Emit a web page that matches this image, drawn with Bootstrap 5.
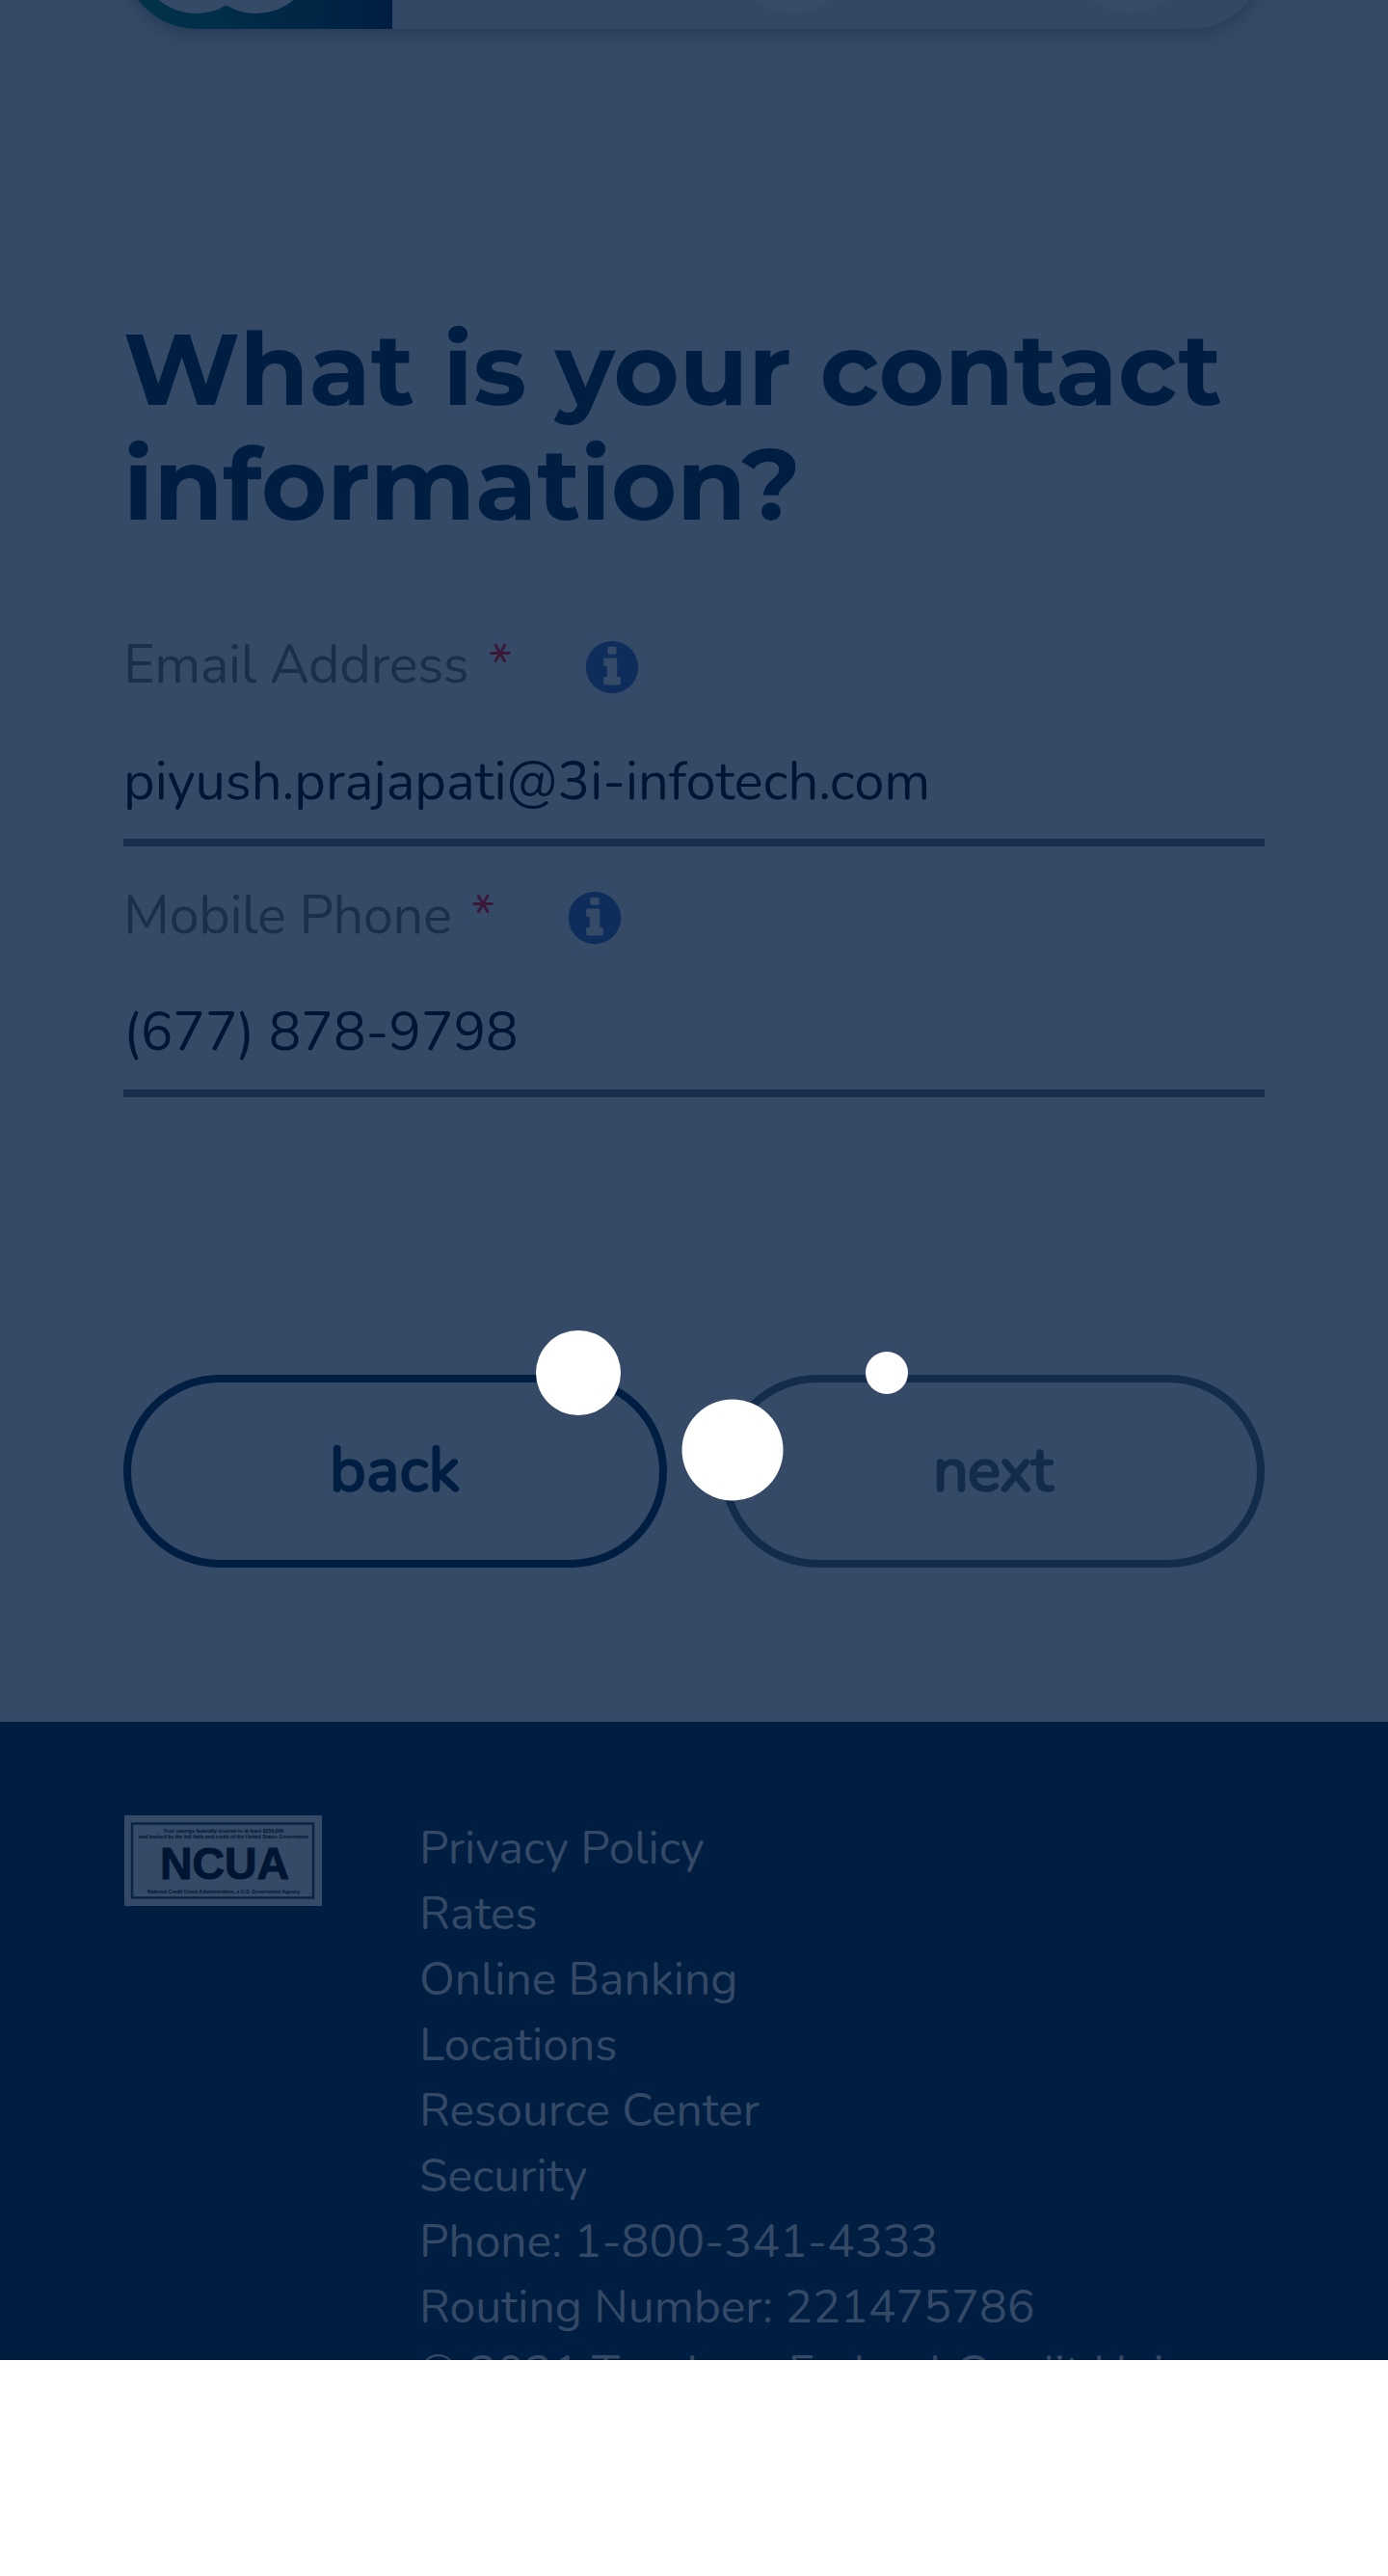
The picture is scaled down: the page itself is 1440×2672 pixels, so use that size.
<!DOCTYPE html>
<html lang="en">
<head>
<meta charset="utf-8">
<meta name="viewport" content="width=device-width, initial-scale=1">
<title>Contact information</title>
<link rel="stylesheet" href="https://cdn.jsdelivr.net/npm/bootstrap@5.3.0/dist/css/bootstrap.min.css">
<style>
  body { font-family: Nunito, Lato, "Open Sans", sans-serif; font-size: 56px; line-height: 84px; color: #001433; background: #fff; }
  .screen { height: 2448px; background: #354a66; }
  .gutter { padding-left: 128px; padding-right: 128px; }

  /* step tracker, scrolled mostly out of view */
  .tracker-clip { height: 70px; }
  .tracker { height: 152px; margin-top: -122px; border-radius: 76px; background: #324864; box-shadow: 0 6px 18px 0 #273c58; }
  .tracker-done { width: 279px; border-radius: 76px 0 0 76px; background: linear-gradient(90deg, #00344a 0, #002e49 35%, #001e42 100%); }
  .tracker svg { display: block; }

  .page-title { margin: 253px 0 0; font: 700 104px/119px Montserrat, Inter, sans-serif; letter-spacing: .1px; color: #001e42; white-space: nowrap; }
  .fields { margin-top: 87px; gap: 30px; }
  .field-name { height: 84px; font-weight: 400; letter-spacing: -.4px; color: #1a2f4c; white-space: nowrap; }
  .required-star { color: #3b1838; margin-left: 20px; }
  .info-icon { width: 56px; height: 56px; margin: 4px 0 0 76px; }
  .line-input { height: 146px; padding: 18px 0 0; border: 0; border-bottom: 8px solid #162d4b; border-radius: 0; background: transparent !important; color: #001433 !important; font-size: 56px; line-height: 84px; }

  .actions { margin-top: 288px; gap: 56px; }
  .pill { height: 200px; border: 8px solid #001e42; border-radius: 100px; color: #001e42; font-size: 64px; line-height: 94px; padding: 0 0 2px; -webkit-text-stroke: 2.6px currentColor; letter-spacing: -.7px; }
  .pill:disabled { color: #132c4c; border-color: #132c4c; opacity: 1; }
  .pill-back { width: 564px; letter-spacing: .7px; }

  .site-footer { margin-top: 160px; height: 662px; padding-top: 97px; background: #001e42; overflow: hidden; font-size: 48px; line-height: 68px; color: #344965; }
  .seal { width: 206px; height: 94px; }
  .foot-links { margin: 0 0 0 101px; white-space: nowrap; }
  .foot-links a { color: inherit; text-decoration: none; }

  .loader-dot { position: absolute; border-radius: 50%; background: #fff; transform: translate(-50%, -50%); }
  .dot-a { left: 600px; top: 1424px; width: 88px; height: 88px; }
  .dot-b { left: 760px; top: 1503.5px; width: 105px; height: 105px; }
  .dot-c { left: 920px; top: 1424px; width: 44px; height: 44px; }
</style>
<script src="https://cdn.jsdelivr.net/npm/bootstrap@5.3.0/dist/js/bootstrap.bundle.min.js"></script>
</head>
<body>
<div class="screen position-relative overflow-hidden">
  <header class="tracker-clip gutter overflow-hidden">
    <div class="tracker d-flex">
      <div class="tracker-done">
        <svg width="279" height="152" viewBox="0 0 279 152" fill="#354a66"><circle cx="75.6" cy="74.7" r="61.3"/><circle cx="137.6" cy="74.7" r="61.3"/></svg>
      </div>
      <svg class="flex-grow-1" width="905" height="152" viewBox="0 0 905 152" fill="#364b68"><circle cx="415.7" cy="74.7" r="61.3"/><circle cx="766" cy="74.7" r="61.3"/></svg>
    </div>
  </header>

  <main class="gutter">
    <h1 class="page-title">What is your contact<br>information?</h1>

    <form>
      <div class="fields d-flex flex-column">
        <div>
          <label class="field-name d-flex align-items-center" for="email">Email Address <span class="required-star">*</span>
            <svg class="info-icon" viewBox="0 0 512 512" fill="#0e2d5b"><path d="M256 8C119 8 8 119 8 256s111 248 248 248 248-111 248-248S393 8 256 8zm0 54h18c18 0 24 8 24 18v42c0 8-4 12-12 12h-60c-8 0-12-4-12-12V74c0-8 4-12 12-12zm80 350c0 8-4 12-12 12H188c-8 0-12-4-12-12v-52c0-8 4-12 12-12h20V246h-20c-8 0-12-4-12-12v-52c0-8 4-12 12-12h104c8 0 12 4 12 12v166h20c8 0 12 4 12 12z"/></svg></label>
          <input id="email" class="form-control line-input shadow-none" type="text" value="piyush.prajapati@3i-infotech.com">
        </div>
        <div>
          <label class="field-name d-flex align-items-center" for="phone">Mobile Phone <span class="required-star">*</span>
            <svg class="info-icon" viewBox="0 0 512 512" fill="#0e2d5b"><path d="M256 8C119 8 8 119 8 256s111 248 248 248 248-111 248-248S393 8 256 8zm0 54h18c18 0 24 8 24 18v42c0 8-4 12-12 12h-60c-8 0-12-4-12-12V74c0-8 4-12 12-12zm80 350c0 8-4 12-12 12H188c-8 0-12-4-12-12v-52c0-8 4-12 12-12h20V246h-20c-8 0-12-4-12-12v-52c0-8 4-12 12-12h104c8 0 12 4 12 12v166h20c8 0 12 4 12 12z"/></svg></label>
          <input id="phone" class="form-control line-input shadow-none" type="text" value="(677) 878-9798">
        </div>
      </div>

      <div class="actions d-flex">
        <button type="button" class="btn pill pill-back flex-shrink-0">back</button>
        <button type="button" class="btn pill flex-grow-1" disabled>next</button>
      </div>
    </form>
  </main>

  <footer class="site-footer gutter d-flex align-items-start">
    <svg class="seal flex-shrink-0" viewBox="0 0 206 94" font-family="Liberation Sans, Arial, sans-serif" font-weight="700" fill="#001433" text-anchor="middle">
      <rect x="1" width="205" height="94" fill="#354a66"/>
      <rect x="9" y="8.5" width="188" height="77" fill="none" stroke="#0b2445" stroke-width="2.5"/>
      <text x="104" y="17.5" font-size="6" textLength="125" lengthAdjust="spacingAndGlyphs">Your savings federally insured to at least $250,000</text>
      <text x="104" y="24" font-size="6" textLength="176" lengthAdjust="spacingAndGlyphs">and backed by the full faith and credit of the United States Government</text>
      <text x="105" y="66" font-size="46" textLength="134" lengthAdjust="spacingAndGlyphs" stroke="#001433" stroke-width="1">NCUA</text>
      <text x="104" y="80.5" font-size="6" textLength="158" lengthAdjust="spacingAndGlyphs">National Credit Union Administration, a U.S. Government Agency</text>
    </svg>
    <ul class="foot-links list-unstyled">
      <li><a href="#">Privacy Policy</a></li>
      <li><a href="#">Rates</a></li>
      <li><a href="#">Online Banking</a></li>
      <li><a href="#">Locations</a></li>
      <li><a href="#">Resource Center</a></li>
      <li><a href="#">Security</a></li>
      <li>Phone: 1-800-341-4333</li>
      <li>Routing Number: 221475786</li>
      <li>© 2021 Teachers Federal Credit Union</li>
    </ul>
  </footer>

  <div role="status" aria-label="Loading">
    <span class="loader-dot dot-a"></span>
    <span class="loader-dot dot-b"></span>
    <span class="loader-dot dot-c"></span>
  </div>
</div>
</body>
</html>
